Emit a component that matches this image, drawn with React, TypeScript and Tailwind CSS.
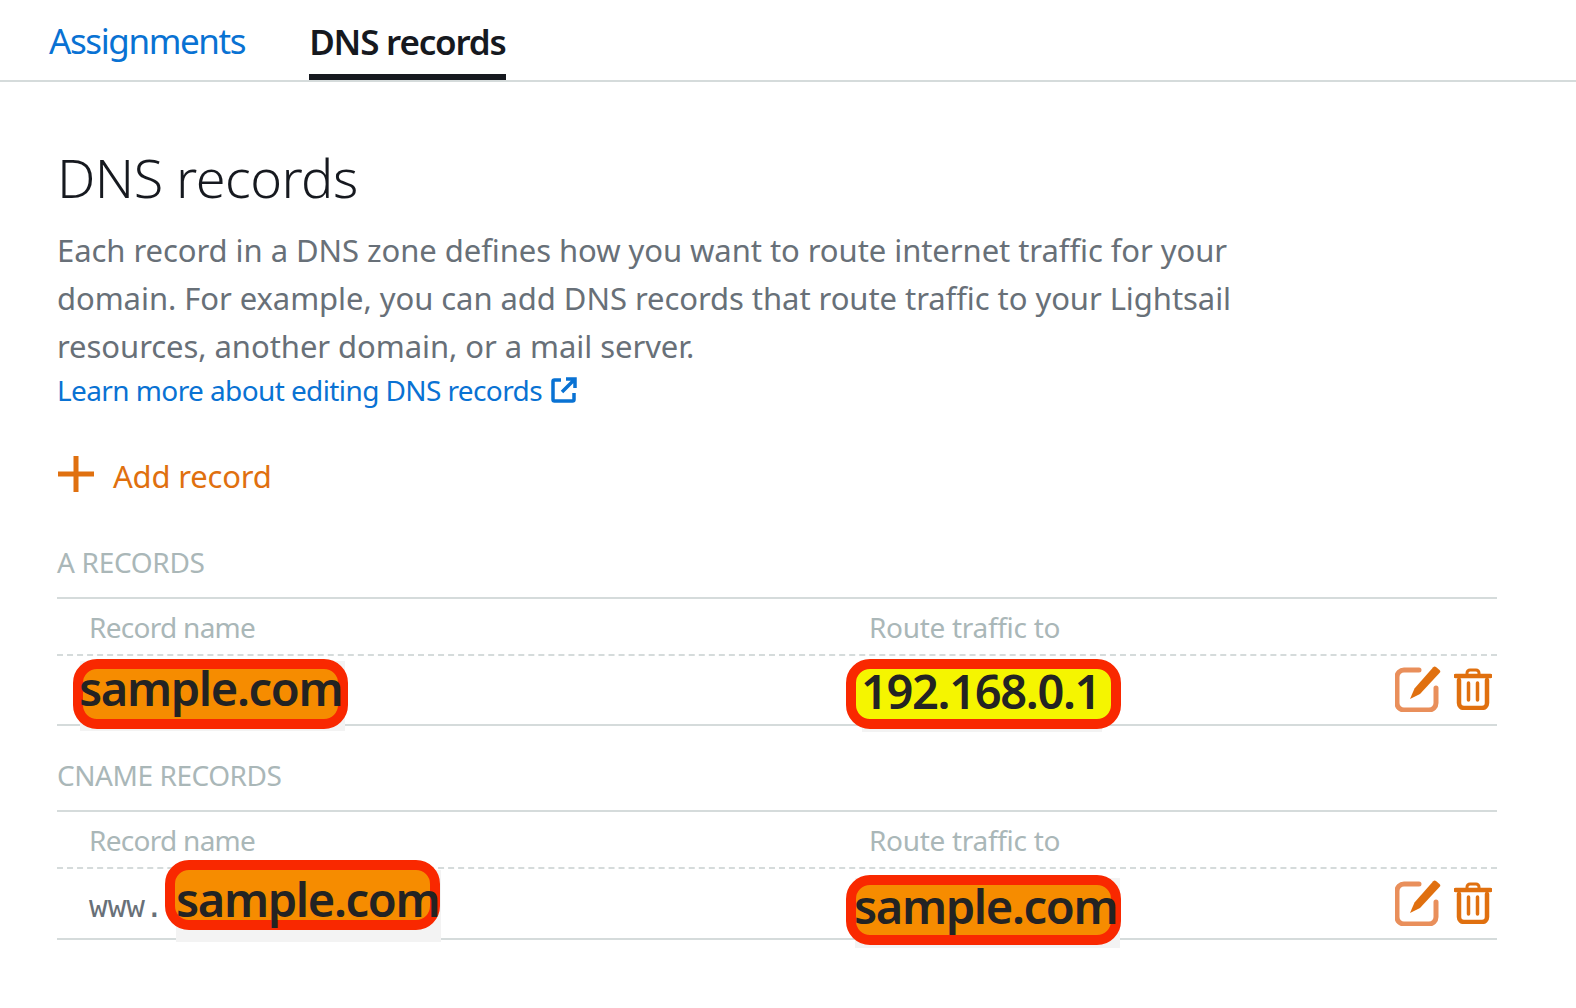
import React from 'react';

const font = "font-['Noto_Sans','Open_Sans',sans-serif]";

function EditIcon() {
  return (
    <svg width="46" height="46" viewBox="0 0 46 46" fill="none" className="shrink-0">
      <path d="M24 4H9a7 7 0 0 0-7 7v26a7 7 0 0 0 7 7h25a7 7 0 0 0 7-7V22" stroke="#e98f5b" strokeWidth="5" strokeLinecap="round" />
      <path d="M41 1l3.5 3a2 2 0 0 1 .2 2.8L25 28 15 33l4.5-10.5L38.2 1.2A2 2 0 0 1 41 1z" fill="#e0700f" />
    </svg>
  );
}

function TrashIcon() {
  return (
    <svg width="38" height="42" viewBox="0 0 38 42" fill="none" className="shrink-0">
      <path d="M1.5 8h35" stroke="#e0700f" strokeWidth="4.5" strokeLinecap="round" />
      <path d="M13 7V5a3 3 0 0 1 3-3h6a3 3 0 0 1 3 3v2" stroke="#e0700f" strokeWidth="3" />
      <path d="M5 12v23a5 5 0 0 0 5 5h18a5 5 0 0 0 5-5V12" stroke="#e0700f" strokeWidth="4.5" strokeLinecap="round" />
      <path d="M14.5 15v17M23.5 15v17" stroke="#e0700f" strokeWidth="3.5" strokeLinecap="round" />
    </svg>
  );
}

function ExternalIcon() {
  return (
    <svg width="26" height="26" viewBox="0 0 26 26" fill="none" className="shrink-0">
      <path d="M10 3H3.5A1.5 1.5 0 0 0 2 4.5v18A1.5 1.5 0 0 0 3.5 24h18a1.5 1.5 0 0 0 1.5-1.5V16" stroke="#0972d3" strokeWidth="3.5" />
      <path d="M15 2h9v9M23.5 2.5L11 15" stroke="#0972d3" strokeWidth="3.5" />
    </svg>
  );
}

function HeaderRow({ height }: { height: string }) {
  return (
    <div className={`flex items-center border-t-2 border-[#d5dbdb] pl-[32px] text-[28px] tracking-[-0.72px] text-[#aab7b8] ${height}`}>
      <span className="w-[780px]">Record name</span>
      <span className="tracking-[-0.3px]">Route traffic to</span>
    </div>
  );
}

function Actions() {
  return (
    <div className="ml-auto flex items-center gap-[13px] pb-[2px] pr-[5px]">
      <EditIcon />
      <TrashIcon />
    </div>
  );
}

function Mark({ className, fill, text, shadow, textClass }: { className: string; fill: string; text: string; shadow: string; textClass: string }) {
  return (
    <div className={`absolute h-[70px] w-[275px] ${className}`}>
      <div className={`absolute ${shadow} bg-[#f3f3f3]`} />
      <div className={`absolute inset-0 rounded-[24px] border-[10px] border-[#f92800] ${fill}`} />
      <span className={`absolute whitespace-nowrap text-[47px] font-semibold leading-none tracking-[-1.35px] text-[#232323] ${textClass}`}>{text}</span>
    </div>
  );
}

export default function App() {
  return (
    <div className={`min-h-screen bg-white ${font}`}>
      <nav className="flex h-[82px] items-end border-b-2 border-[#d5dbdb] pl-[49px]">
        <a className="mb-[-2px] flex h-[81px] items-center text-[35px] tracking-[-1.4px] text-[#0972d3]">Assignments</a>
        <a className="ml-[64px] flex h-[80px] items-center border-b-[6px] border-[#16191f] pt-[10px] text-[35px] font-semibold tracking-[-1.2px] text-[#16191f]">DNS records</a>
      </nav>

      <main className="pl-[57px] pr-[58px] pt-[61px]">
        <h1 className="text-[54px] font-light leading-[68px] tracking-[-0.55px] text-[#16191f]">DNS records</h1>
        <p className="mt-[15px] w-[1240px] text-[31px] leading-[48px] tracking-[-0.06px] text-[#687078]">
          Each record in a DNS zone defines how you want to route internet traffic for your domain. For example, you can add DNS records that route traffic to your Lightsail resources, another domain, or a mail server.
        </p>
        <a className="flex items-center gap-[9px] text-[28px] leading-[40px] tracking-[-0.6px] text-[#0972d3]">
          Learn more about editing DNS records
          <ExternalIcon />
        </a>

        <button className="ml-[1px] mt-[41px] flex h-[50px] items-center gap-[19px] text-[31px] tracking-[-0.2px] text-[#e0700f]">
          <svg width="36" height="36" viewBox="0 0 36 36" className="mb-[4px] shrink-0">
            <path d="M18 0v36M0 18h36" stroke="#e0700f" strokeWidth="5" />
          </svg>
          Add record
        </button>

        <section className="mt-[37px] w-[1440px]">
          <h2 className="h-[59px] text-[28px] leading-[48px] tracking-[-0.3px] text-[#aab7b8]">A RECORDS</h2>
          <HeaderRow height="h-[57px]" />
          <div className="relative flex h-[72px] items-center border-b-2 border-[#d5dbdb] [border-top:2px_dashed_#d5dbdb]">
            <Mark className="left-[16px] top-[3px]" fill="bg-[#f68c00]" text="sample.com" shadow="left-[7px] top-[2px] h-[70px] w-[265px]" textClass="left-[6px] top-[6px]" />
            <Mark className="left-[789px] top-[3px]" fill="bg-[#f5f500]" text="192.168.0.1" shadow="left-[16px] top-[3px] h-[70px] w-[240px]" textClass="left-[15px] top-[9px] tracking-[-1.05px]" />
            <Actions />
          </div>

          <h2 className="mt-[20px] h-[64px] text-[28px] leading-[58px] tracking-[-0.45px] text-[#aab7b8]">CNAME RECORDS</h2>
          <HeaderRow height="h-[57px]" />
          <div className="relative flex h-[73px] items-center border-b-2 border-[#d5dbdb] [border-top:2px_dashed_#d5dbdb]">
            <span className="ml-[32px] mt-[6px] font-['DejaVu_Sans_Mono',monospace] text-[31px] text-[#687078]">www.</span>
            <Mark className="left-[108px] top-[-9px]" fill="bg-[#f68c00]" text="sample.com" shadow="left-[11px] top-[10px] h-[72px] w-[265px]" textClass="left-[11px] top-[16px]" />
            <Mark className="left-[789px] top-[6px]" fill="bg-[#f68c00]" text="sample.com" shadow="left-[9px] top-[3px] h-[70px] w-[265px]" textClass="left-[8px] top-[8px]" />
            <Actions />
          </div>
        </section>
      </main>
    </div>
  );
}
